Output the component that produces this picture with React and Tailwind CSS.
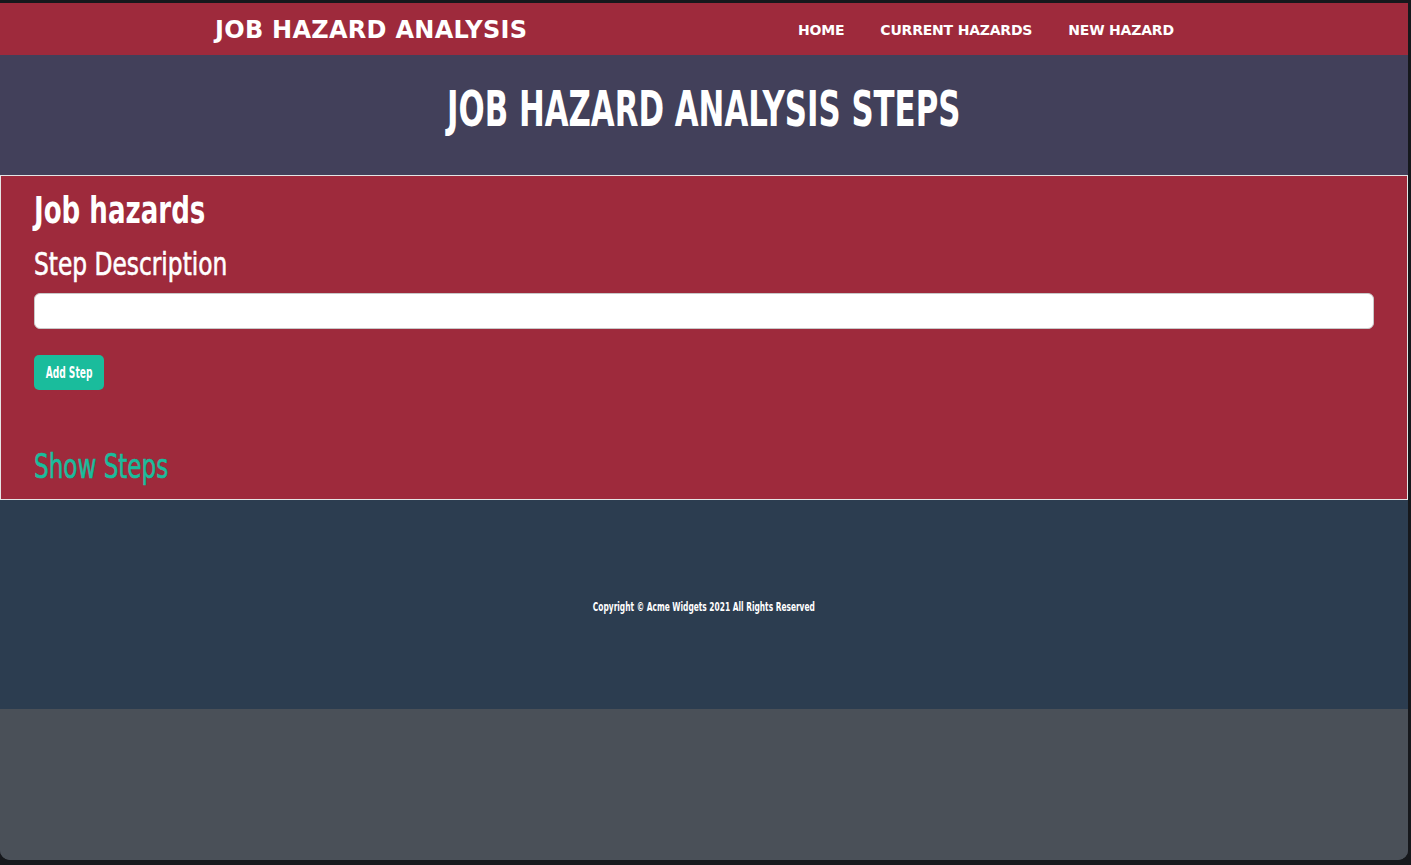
export default function App() {
  const cond = { fontFamily: '"DejaVu Sans Condensed", "DejaVu Sans", "Liberation Sans", sans-serif' };
  const wide = { fontFamily: '"DejaVu Sans", "Liberation Sans", sans-serif' };
  return (
    <div className="w-[1411px] h-[865px] bg-[#16181c] pt-[3px] overflow-hidden">
      <div className="w-[1408px] h-[857px] flex flex-col rounded-b-[10px] overflow-hidden bg-[#4a5058]">
        <nav className="h-[52px] bg-[#9e2a3c] flex items-center text-white shrink-0">
          <div className="pl-[215px] w-[798px] text-[24px] font-bold tracking-[0.28px] whitespace-nowrap pt-[1px]" style={wide}>JOB HAZARD ANALYSIS</div>
          <div className="flex gap-[36px] text-[14px] font-bold tracking-[-0.2px] pt-[2px] whitespace-nowrap" style={wide}>
            <span>HOME</span>
            <span>CURRENT HAZARDS</span>
            <span>NEW HAZARD</span>
          </div>
        </nav>
        <header className="h-[120px] bg-[#42405a] flex justify-center items-start pt-[29px] shrink-0">
          <h1 className="inline-block origin-center scale-x-[0.685] text-white text-[50px] font-bold leading-none whitespace-nowrap" style={cond}>JOB HAZARD ANALYSIS STEPS</h1>
        </header>
        <section className="h-[325px] bg-[#9e2a3c] border border-[#e5e5e5] px-[33px] pt-[12px] shrink-0">
          <div>
            <h2 className="inline-block origin-left scale-x-[0.763] text-white text-[38px] font-bold leading-[44px] whitespace-nowrap" style={cond}>Job hazards</h2>
          </div>
          <div className="mt-[12px]">
            <h3 className="inline-block origin-left scale-x-[0.81] text-white text-[32px] leading-[40px] whitespace-nowrap [-webkit-text-stroke:0.6px_white]" style={cond}>Step Description</h3>
          </div>
          <input type="text" className="block mt-[9px] w-full h-[36px] bg-white rounded-[6px] border border-[#c8c8c8] outline-none" />
          <button className="mt-[26px] w-[70px] h-[35px] bg-[#1abc9c] rounded-[5px] flex items-center justify-center overflow-visible">
            <span className="inline-block origin-center scale-x-[0.63] text-white text-[16px] font-bold whitespace-nowrap" style={cond}>Add Step</span>
          </button>
          <div className="mt-[56px]">
            <span className="inline-block origin-left scale-x-[0.755] text-[#1abc9c] text-[34px] leading-[40px] whitespace-nowrap [-webkit-text-stroke:0.6px_#1abc9c]" style={cond}>Show Steps</span>
          </div>
        </section>
        <footer className="h-[209px] bg-[#2c3d50] flex items-center justify-center shrink-0">
          <p className="inline-block origin-center scale-x-[0.69] text-white text-[12px] font-bold mt-[4px] whitespace-nowrap" style={cond}>Copyright © Acme Widgets 2021 All Rights Reserved</p>
        </footer>
        <div className="flex-1 bg-[#4a5058]"></div>
      </div>
    </div>
  );
}
